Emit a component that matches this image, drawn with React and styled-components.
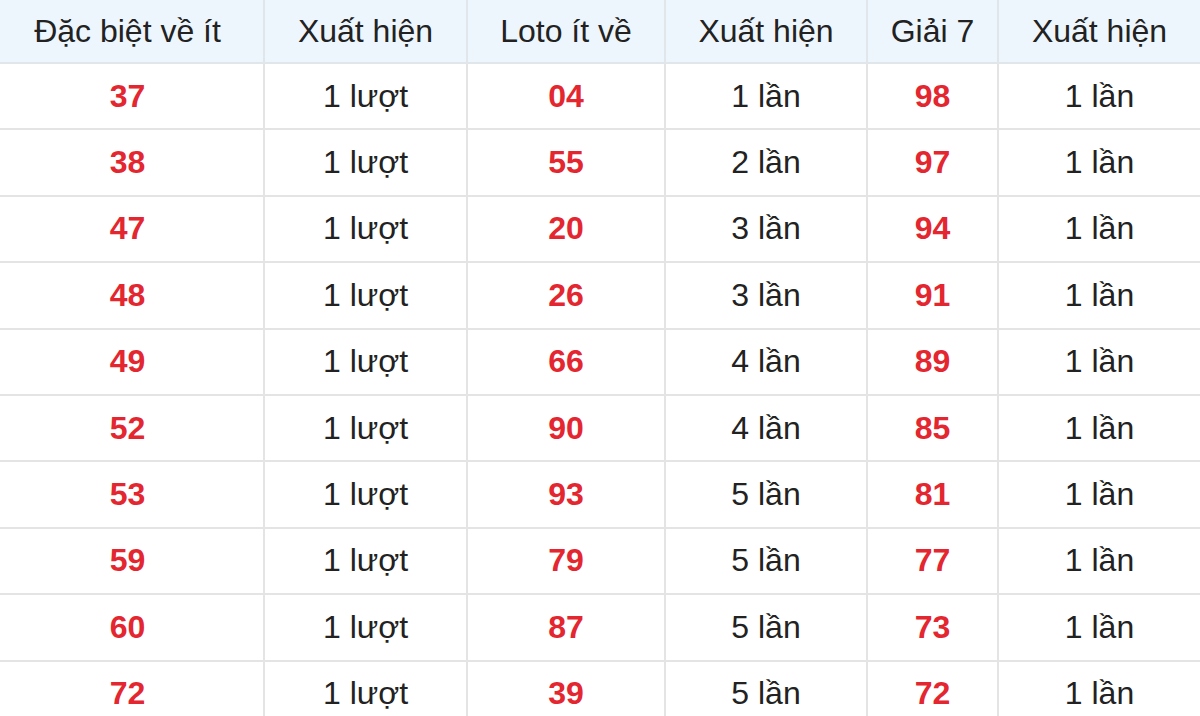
import React from "react";
import styled, { createGlobalStyle } from "styled-components";

const GlobalStyle = createGlobalStyle`
    html, body {
        margin: 0;
        padding: 0;
        background: #ffffff;
    }
    body {
        font-family: "Liberation Sans", Arial, sans-serif;
        overflow: hidden;
    }
`;

const Table = styled.table`
    width: 1200px;
    border-collapse: collapse;
    table-layout: fixed;
    color: #222222;
`;

const HeadRow = styled.tr`
    height: 63px;
    background-color: #eef6fd;
`;

const HeadCell = styled.th`
    font-weight: normal;
    font-size: 32px;
    text-align: center;
    padding: 0;
    border-right: 2px solid #e1e6ea;
    border-bottom: 2px solid #e1e6ea;
    white-space: nowrap;
    &:first-child {
        padding-right: 8px;
    }
    &:last-child {
        border-right: none;
    }
`;

const Row = styled.tr`
    height: 66.4px;
`;

const Cell = styled.td`
    font-size: 32px;
    text-align: center;
    padding: 0;
    border-right: 2px solid #e4e4e4;
    border-bottom: 2px solid #e4e4e4;
    color: ${props => props.hot ? "#e3262f" : "#222222"};
    font-weight: ${props => props.hot ? "bold" : "normal"};
    white-space: nowrap;
    &:first-child {
        padding-right: 8px;
    }
    &:last-child {
        border-right: none;
    }
`;

const columns = [
    { title: "Đặc biệt về ít", width: 264 },
    { title: "Xuất hiện", width: 203 },
    { title: "Loto ít về", width: 198 },
    { title: "Xuất hiện", width: 202 },
    { title: "Giải 7", width: 131 },
    { title: "Xuất hiện", width: 202 },
];

const rows = [
    ["37", "1 lượt", "04", "1 lần", "98", "1 lần"],
    ["38", "1 lượt", "55", "2 lần", "97", "1 lần"],
    ["47", "1 lượt", "20", "3 lần", "94", "1 lần"],
    ["48", "1 lượt", "26", "3 lần", "91", "1 lần"],
    ["49", "1 lượt", "66", "4 lần", "89", "1 lần"],
    ["52", "1 lượt", "90", "4 lần", "85", "1 lần"],
    ["53", "1 lượt", "93", "5 lần", "81", "1 lần"],
    ["59", "1 lượt", "79", "5 lần", "77", "1 lần"],
    ["60", "1 lượt", "87", "5 lần", "73", "1 lần"],
    ["72", "1 lượt", "39", "5 lần", "72", "1 lần"],
];

export default function App() {
    return (
        <>
            <GlobalStyle />
            <Table>
                <colgroup>
                    {columns.map((c, i) => <col key={i} style={{ width: c.width }} />)}
                </colgroup>
                <thead>
                    <HeadRow>
                        {columns.map((c, i) => <HeadCell key={i}>{c.title}</HeadCell>)}
                    </HeadRow>
                </thead>
                <tbody>
                    {rows.map((r, i) => (
                        <Row key={i}>
                            {r.map((v, j) => <Cell key={j} hot={j % 2 === 0}>{v}</Cell>)}
                        </Row>
                    ))}
                </tbody>
            </Table>
        </>
    );
}
